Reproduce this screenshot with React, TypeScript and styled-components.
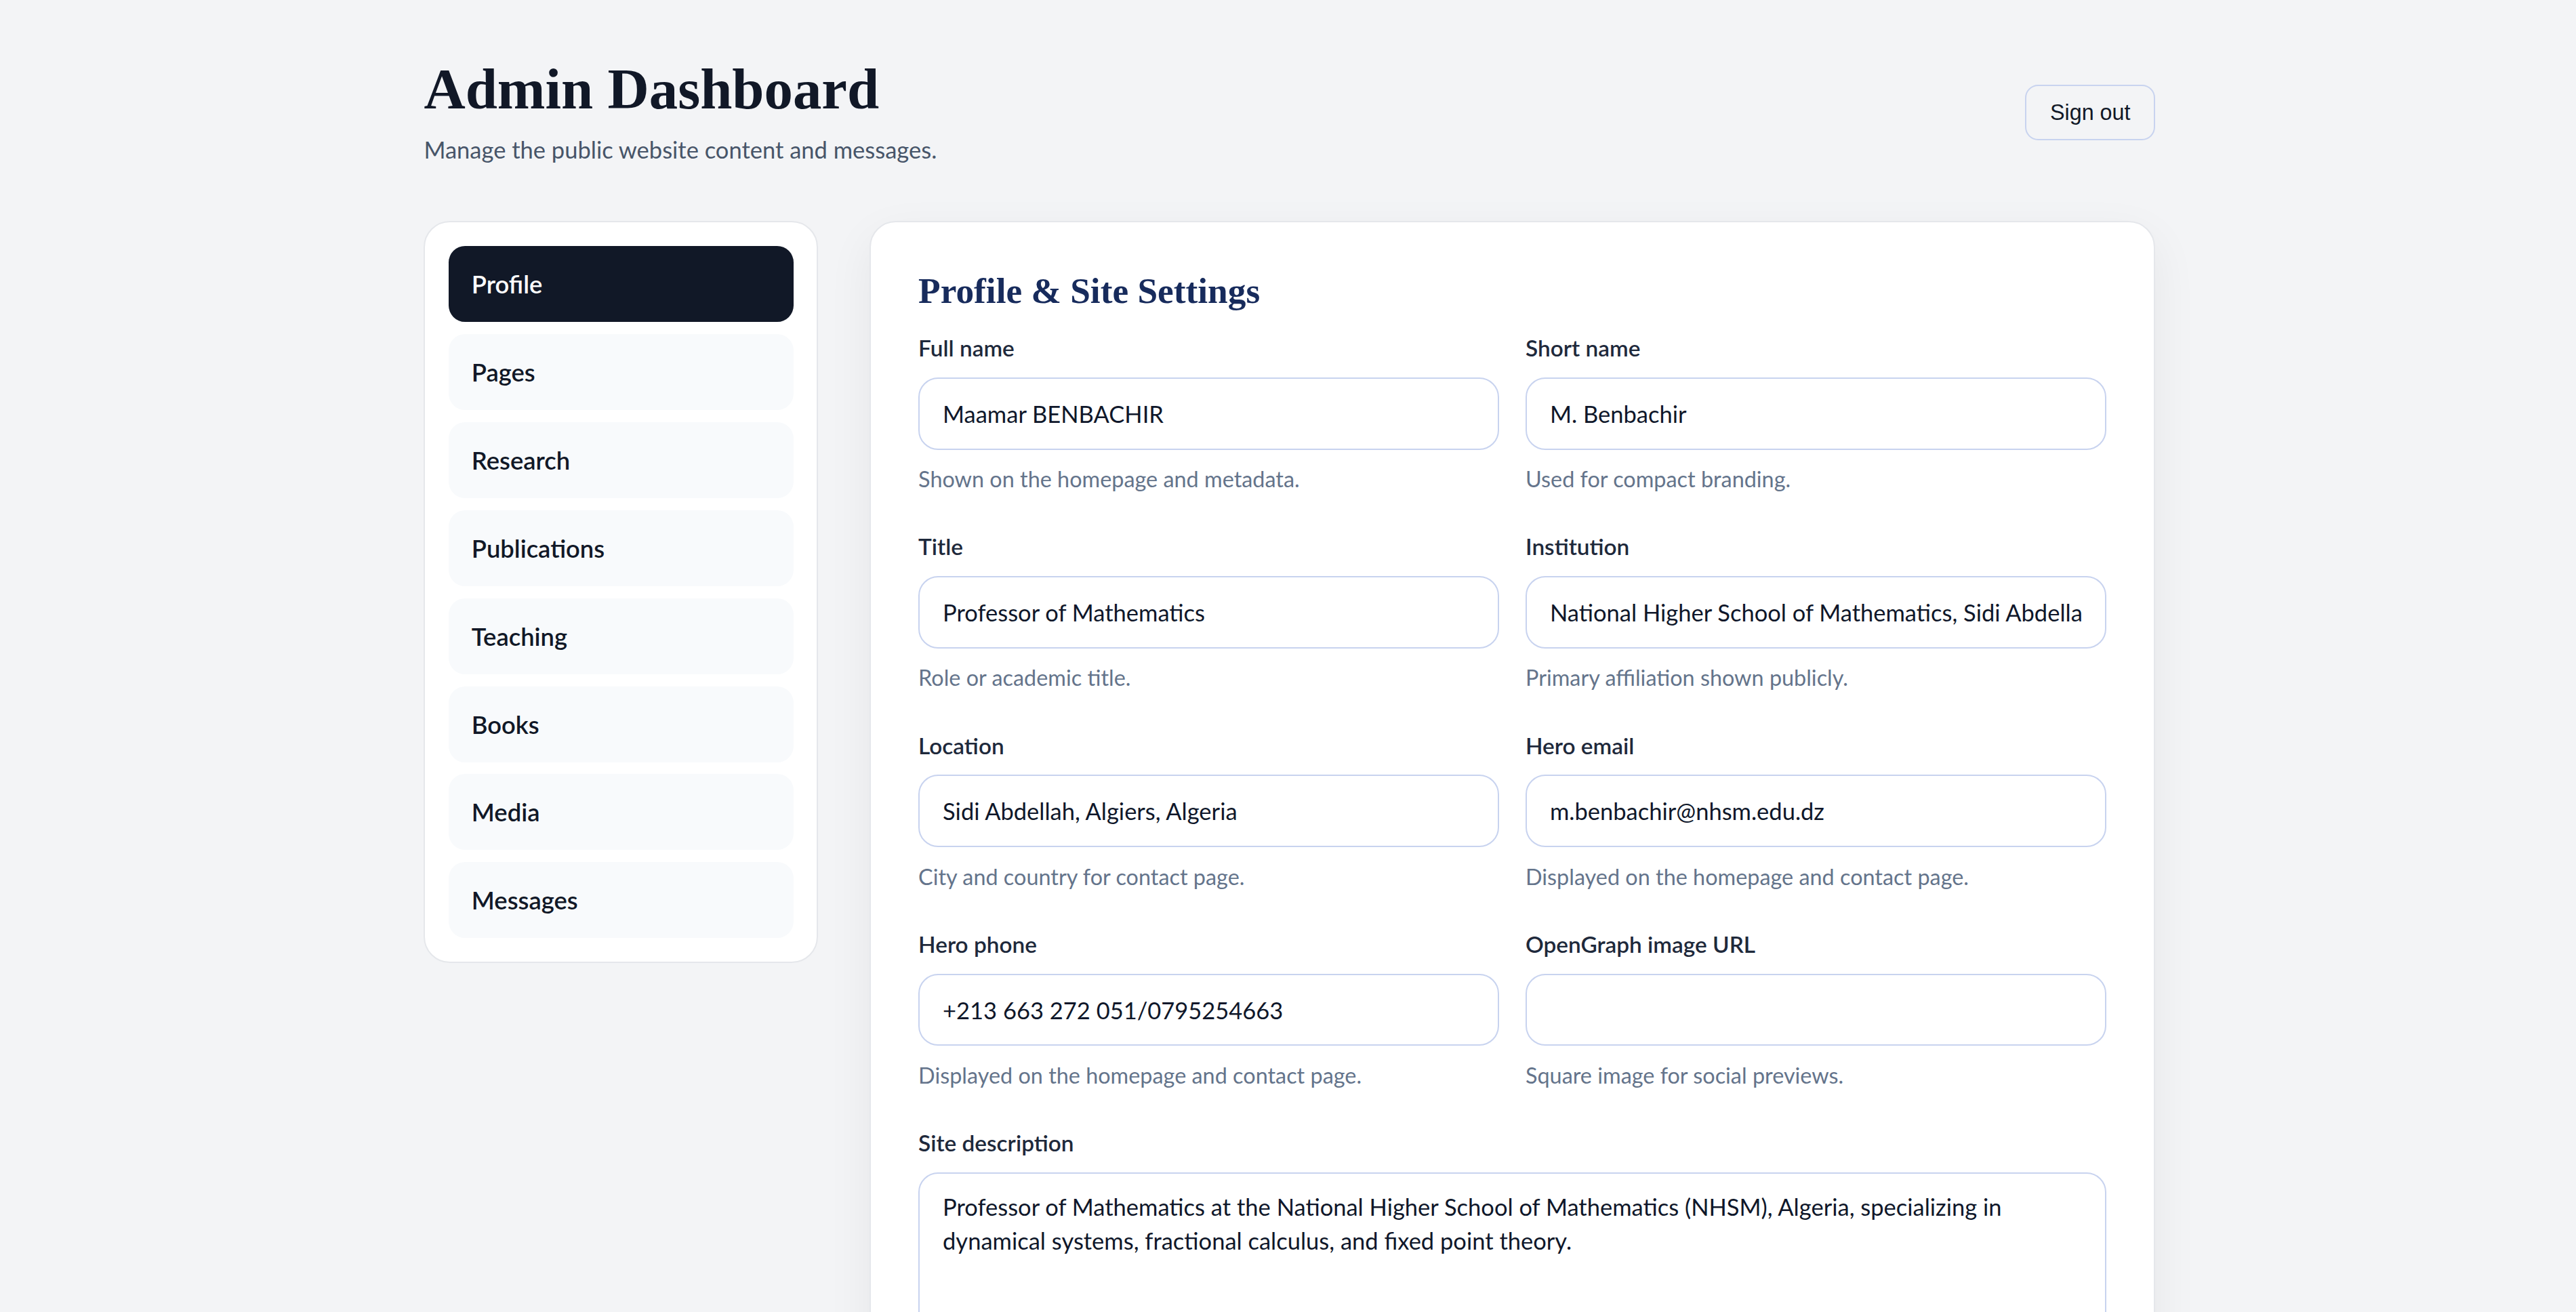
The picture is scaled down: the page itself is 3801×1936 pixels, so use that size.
import React from "react";
import styled, { createGlobalStyle } from "styled-components";

// The design is laid out in rem; 1rem is one "design px" * 16 scaled to the
// 3801px wide capture, so every value below reads like a normal 16px layout.
const GlobalStyle = createGlobalStyle`
  html {
    font-size: 38.786px;
  }
  body {
    margin: 0;
    background: #f3f4f6;
    font-family: "Lato", "Noto Sans", sans-serif;
    color: #0f172a;
  }
  * { box-sizing: border-box; }
`;

// ─── Layout ──────────────────────────────────────────────────────────────────
const Page = styled.div`
  min-height: 100vh;
  background: #f3f4f6;
`;

const Container = styled.div`
  width: 66rem;
  margin: 0 auto;
  padding: 2.14rem 0 4rem 0.125rem;
`;

const Header = styled.header`
  display: flex;
  align-items: center;
  justify-content: space-between;
`;

const Title = styled.h1`
  margin: 0;
  font-family: "Liberation Serif", "Times New Roman", serif;
  font-size: 2.1875rem;
  line-height: 2.5rem;
  font-weight: 700;
  color: #111827;
`;

const Subtitle = styled.p`
  margin: 0.37rem 0 0;
  font-size: 0.89rem;
  line-height: 1.40625rem;
  color: #475569;
`;

const SignOut = styled.button`
  font-family: "Liberation Sans", Arial, sans-serif;
  font-size: 0.8333rem;
  line-height: 1rem;
  padding: 0.5rem 0.9rem;
  background: transparent;
  color: #111827;
  border: 0.0625rem solid #c8d3ef;
  border-radius: 0.5rem;
  cursor: pointer;
`;

const Body = styled.div`
  display: grid;
  grid-template-columns: 15rem 1fr;
  gap: 1.95rem;
  align-items: start;
  margin-top: 2rem;
`;

// ─── Sidebar ─────────────────────────────────────────────────────────────────
const Sidebar = styled.nav`
  display: flex;
  flex-direction: column;
  gap: 0.4625rem;
  padding: 0.89rem;
  background: #fff;
  border: 0.0625rem solid #e5e7eb;
  border-radius: 1rem;
`;

const NavItem = styled.button<{ $active?: boolean }>`
  display: flex;
  align-items: center;
  height: 2.8875rem;
  padding: 0 0.875rem;
  border: none;
  border-radius: 0.625rem;
  background: ${(p) => (p.$active ? "#111827" : "#f8fafc")};
  color: ${(p) => (p.$active ? "#ffffff" : "#111827")};
  font-family: inherit;
  font-size: 0.9375rem;
  font-weight: 600;
  text-align: left;
  cursor: pointer;
`;

// ─── Settings panel ──────────────────────────────────────────────────────────
const Panel = styled.section`
  background: #fff;
  border: 0.0625rem solid #e5e7eb;
  border-radius: 1rem;
  padding: 1.8rem 1.8125rem 2rem;
  box-shadow: 0 0.6rem 1.8rem rgba(15, 23, 42, 0.06);
`;

const PanelTitle = styled.h2`
  margin: 0 0 0.69rem;
  font-family: "Liberation Serif", "Times New Roman", serif;
  font-size: 1.375rem;
  line-height: 1.2;
  font-weight: 700;
  color: #172b5c;
`;

const FieldGrid = styled.div`
  display: grid;
  grid-template-columns: 1fr 1fr;
  column-gap: 1rem;
  row-gap: 1.3125rem;
`;

const Field = styled.div<{ $wide?: boolean }>`
  display: flex;
  flex-direction: column;
  min-width: 0;
  grid-column: ${(p) => (p.$wide ? "1 / -1" : "auto")};
`;

const Label = styled.label`
  font-size: 0.86rem;
  line-height: 1.25rem;
  font-weight: 600;
  color: #1e293b;
`;

const Input = styled.input`
  margin-top: 0.5rem;
  width: 100%;
  height: 2.75rem;
  padding: 0 0.875rem;
  border: 0.0625rem solid #c8d3ef;
  border-radius: 0.75rem;
  background: #fff;
  font-family: inherit;
  font-size: 0.89rem;
  color: #0f172a;
  outline: none;
`;

const TextArea = styled.textarea`
  margin-top: 0.5rem;
  width: 100%;
  min-height: 9rem;
  padding: 0.625rem 0.875rem;
  border: 0.0625rem solid #c8d3ef;
  border-radius: 0.75rem;
  background: #fff;
  font-family: inherit;
  font-size: 0.89rem;
  line-height: 1.45;
  color: #0f172a;
  resize: vertical;
  outline: none;
`;

const Hint = styled.p`
  margin: 0.5rem 0 0;
  font-size: 0.835rem;
  line-height: 1.25rem;
  color: #64748b;
`;

// ─── Data ────────────────────────────────────────────────────────────────────
const sections = [
  "Profile",
  "Pages",
  "Research",
  "Publications",
  "Teaching",
  "Books",
  "Media",
  "Messages",
];

const fields = [
  { id: "fullName", label: "Full name", value: "Maamar BENBACHIR", hint: "Shown on the homepage and metadata." },
  { id: "shortName", label: "Short name", value: "M. Benbachir", hint: "Used for compact branding." },
  { id: "title", label: "Title", value: "Professor of Mathematics", hint: "Role or academic title." },
  {
    id: "institution",
    label: "Institution",
    value: "National Higher School of Mathematics, Sidi Abdellah, Algiers",
    hint: "Primary affiliation shown publicly.",
  },
  { id: "location", label: "Location", value: "Sidi Abdellah, Algiers, Algeria", hint: "City and country for contact page." },
  { id: "heroEmail", label: "Hero email", value: "m.benbachir@nhsm.edu.dz", hint: "Displayed on the homepage and contact page." },
  { id: "heroPhone", label: "Hero phone", value: "+213 663 272 051/0795254663", hint: "Displayed on the homepage and contact page." },
  { id: "ogImage", label: "OpenGraph image URL", value: "", hint: "Square image for social previews." },
];

const description =
  "Professor of Mathematics at the National Higher School of Mathematics (NHSM), Algeria, specializing in dynamical systems, fractional calculus, and fixed point theory.";

// ─── Component ───────────────────────────────────────────────────────────────
const App: React.FC = () => {
  return (
    <Page>
      <GlobalStyle />
      <Container>
        <Header>
          <div>
            <Title>Admin Dashboard</Title>
            <Subtitle>Manage the public website content and messages.</Subtitle>
          </div>
          <SignOut type="button">Sign out</SignOut>
        </Header>

        <Body>
          <Sidebar>
            {sections.map((s) => (
              <NavItem key={s} type="button" $active={s === "Profile"}>
                {s}
              </NavItem>
            ))}
          </Sidebar>

          <Panel>
            <PanelTitle>Profile &amp; Site Settings</PanelTitle>
            <FieldGrid>
              {fields.map((f) => (
                <Field key={f.id}>
                  <Label htmlFor={f.id}>{f.label}</Label>
                  <Input id={f.id} defaultValue={f.value} />
                  <Hint>{f.hint}</Hint>
                </Field>
              ))}
              <Field $wide>
                <Label htmlFor="siteDescription">Site description</Label>
                <TextArea id="siteDescription" rows={6} defaultValue={description} />
              </Field>
            </FieldGrid>
          </Panel>
        </Body>
      </Container>
    </Page>
  );
};

export default App;
